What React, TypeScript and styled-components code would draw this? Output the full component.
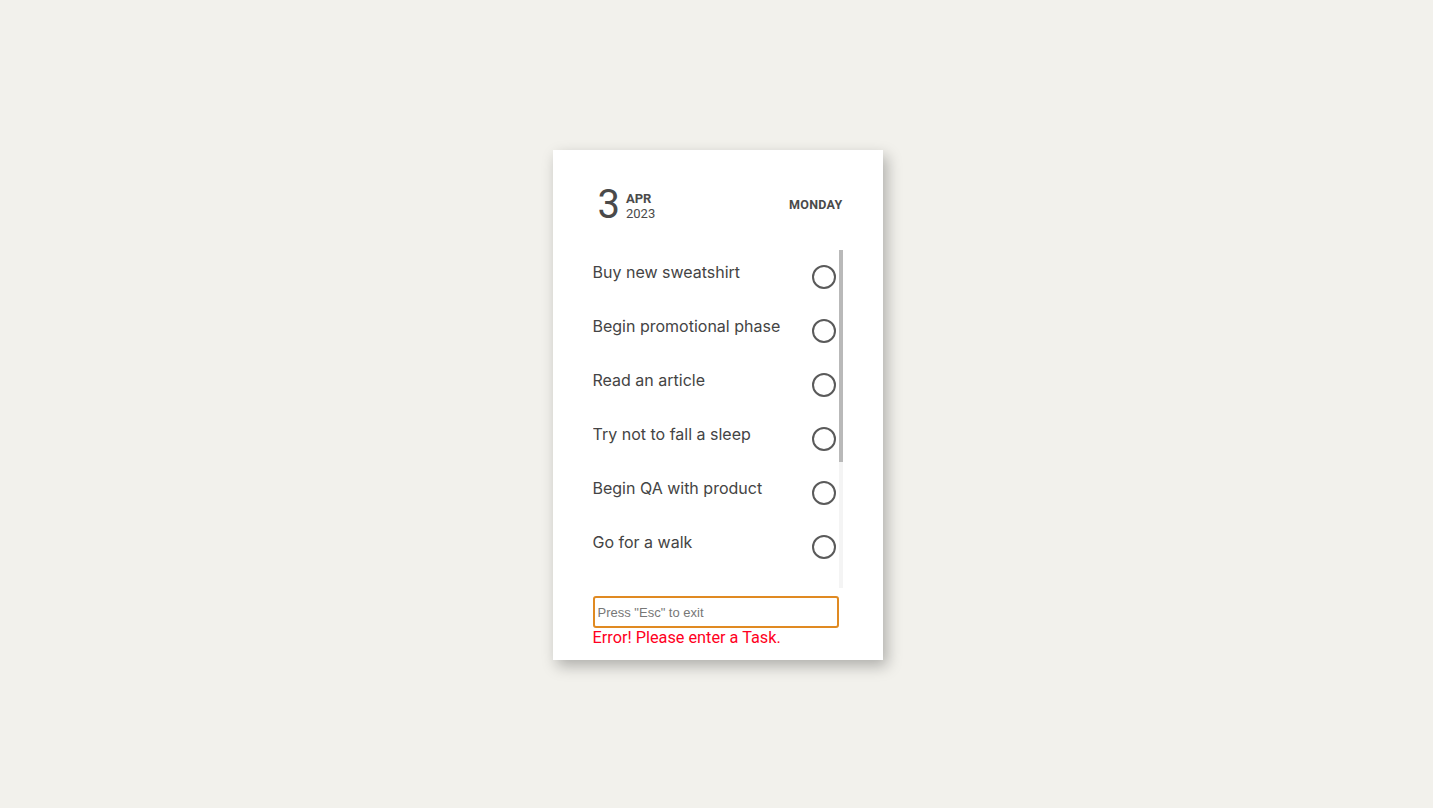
import React, { useState, useRef } from "react";
import styled, { createGlobalStyle } from "styled-components";

interface Task {
  id: number;
  title: string;
  done: boolean;
}

const initialTasks: Task[] = [
  { id: 1, title: "Buy new sweatshirt", done: false },
  { id: 2, title: "Begin promotional phase", done: false },
  { id: 3, title: "Read an article", done: false },
  { id: 4, title: "Try not to fall a sleep", done: false },
  { id: 5, title: "Begin QA with product", done: false },
  { id: 6, title: "Go for a walk", done: false },
  { id: 7, title: "Call the bank", done: false },
  { id: 8, title: "Water the plants", done: false },
  { id: 9, title: "Reply to emails", done: false },
  { id: 10, title: "Plan the weekend", done: false }
];

const LIST_HEIGHT = 338;
const ITEM_HEIGHT = 54;

const GlobalStyle = createGlobalStyle`
  html, body {
    margin: 0;
    padding: 0;
    background: #f2f1ec;
    font-family: Roboto, "Liberation Sans", Arial, sans-serif;
  }
`;

export const Page = styled.div`
  min-height: 100vh;
  box-sizing: border-box;
  padding: 2px 0 0 2px;
  display: flex;
  align-items: center;
  justify-content: center;
`;

export const Card = styled.div`
  width: 330px;
  height: 510px;
  box-sizing: border-box;
  padding: 35px 40px 0;
  background: #fff;
  box-shadow: 4px 6px 14px rgba(0, 0, 0, 0.28);
  display: flex;
  flex-direction: column;
`;

export const Header = styled.div`
  display: flex;
  align-items: center;
  justify-content: space-between;
  padding-left: 5px;
  color: #4a4a4a;
`;

export const DateBlock = styled.div`
  display: flex;
  align-items: center;
  gap: 6px;
`;

export const Day = styled.span`
  font-size: 40px;
  line-height: 40px;
`;

export const MonthYear = styled.div`
  display: flex;
  flex-direction: column;
  font-size: 13px;
  line-height: 15px;
  padding-top: 1px;
`;

export const Month = styled.span`
  font-weight: 700;
`;

export const Weekday = styled.span`
  font-size: 12.5px;
  font-weight: 700;
  letter-spacing: 0.3px;
  padding-bottom: 1px;
`;

export const ListArea = styled.div`
  display: flex;
  margin-top: 25px;
  height: ${LIST_HEIGHT}px;
`;

export const List = styled.ul`
  list-style: none;
  margin: 0;
  padding: 0;
  flex: 1;
  overflow-y: auto;
  scrollbar-width: none;

  &::-webkit-scrollbar {
    display: none;
  }
`;

export const ScrollTrack = styled.div`
  width: 4px;
  background: #f4f4f4;
`;

export const ScrollThumb = styled.div`
  width: 4px;
  background: #b9b9b9;
`;

export const Item = styled.li`
  height: ${ITEM_HEIGHT}px;
  display: flex;
  align-items: center;
  justify-content: space-between;
  padding-right: 3px;
`;

export const Title = styled.span`
  font-family: Inter, Roboto, sans-serif;
  font-size: 16px;
  color: #444;
  margin-bottom: 10px;
`;

interface CheckProps {
  $done: boolean;
}

export const Check = styled.button<CheckProps>`
  width: 24px;
  height: 24px;
  padding: 0;
  border-radius: 50%;
  border: 2px solid #5a5a5a;
  background: ${p => (p.$done ? "#5a5a5a" : "transparent")};
  cursor: pointer;
`;

export const Input = styled.input`
  margin-top: 8px;
  width: 246px;
  height: 32px;
  box-sizing: border-box;
  padding: 0 3px;
  border: 2px solid #e08a22;
  border-radius: 3px;
  outline: none;
  font-family: "Liberation Sans", Arial, sans-serif;
  font-size: 13px;
  color: #333;
  caret-color: #000;

  &::placeholder {
    color: #777;
  }
`;

export const Error = styled.div`
  color: #ff0022;
  font-size: 16.3px;
  line-height: 18px;
  margin-top: 1px;
`;

const App: React.FC = () => {
  const [tasks, setTasks] = useState(initialTasks);
  const [text, setText] = useState("");
  const [scrollTop, setScrollTop] = useState(0);
  const listRef = useRef<HTMLUListElement>(null);

  const toggle = (id: number) =>
    setTasks(tasks.map(t => (t.id === id ? { ...t, done: !t.done } : t)));

  const contentHeight = Math.max(tasks.length * ITEM_HEIGHT, LIST_HEIGHT);
  const thumbHeight = (LIST_HEIGHT * LIST_HEIGHT) / contentHeight;
  const thumbTop = (scrollTop / contentHeight) * LIST_HEIGHT;

  return (
    <Page>
      <GlobalStyle />
      <Card>
        <Header>
          <DateBlock>
            <Day>3</Day>
            <MonthYear>
              <Month>APR</Month>
              <span>2023</span>
            </MonthYear>
          </DateBlock>
          <Weekday>MONDAY</Weekday>
        </Header>
        <ListArea>
          <List
            ref={listRef}
            onScroll={() => setScrollTop(listRef.current ? listRef.current.scrollTop : 0)}
          >
            {tasks.map(t => (
              <Item key={t.id}>
                <Title>{t.title}</Title>
                <Check $done={t.done} onClick={() => toggle(t.id)} aria-label="done" />
              </Item>
            ))}
          </List>
          <ScrollTrack>
            <ScrollThumb style={{ height: thumbHeight, marginTop: thumbTop }} />
          </ScrollTrack>
        </ListArea>
        <Input
          autoFocus
          placeholder={'Press "Esc" to exit'}
          value={text}
          onChange={e => setText(e.target.value)}
        />
        <Error>Error! Please enter a Task.</Error>
      </Card>
    </Page>
  );
};

export default App;
